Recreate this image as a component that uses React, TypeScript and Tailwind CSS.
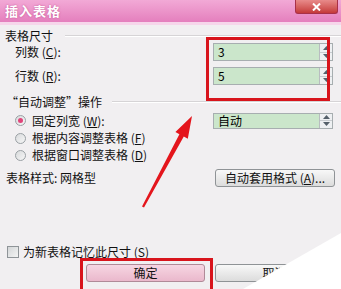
import React from "react"

const font = { fontFamily: '"Noto Sans CJK SC", "Noto Sans", sans-serif' }

function Spinner() {
  return (
    <div className="flex flex-col w-[13px] h-full border-l border-[#b8bcc0] bg-[#eef0f2]">
      <div className="flex-1 flex items-center justify-center border-b border-[#c8ccd0]">
        <svg width="7" height="4" viewBox="0 0 7 4"><path d="M0 4 L3.5 0 L7 4 Z" fill="#55606a" /></svg>
      </div>
      <div className="flex-1 flex items-center justify-center">
        <svg width="7" height="4" viewBox="0 0 7 4"><path d="M0 0 L3.5 4 L7 0 Z" fill="#55606a" /></svg>
      </div>
    </div>
  )
}

function NumInput({ value, h }: { value: string; h: string }) {
  return (
    <div className={`ml-auto mr-[8px] w-[120px] ${h} flex border border-[#a7aeb0] bg-[#cbe6cb]`}>
      <div className="flex-1 flex items-center pl-[4px] text-[12px] text-black leading-none">{value}</div>
      <Spinner />
    </div>
  )
}

function Radio({ checked }: { checked?: boolean }) {
  return (
    <div className="w-[11px] h-[11px] rounded-full border border-[#9aa0a4] bg-gradient-to-br from-[#d8dadc] to-[#f6f6f6] flex items-center justify-center">
      {checked && <div className="w-[5px] h-[5px] rounded-full bg-[#e0447a]" />}
    </div>
  )
}

export default function App() {
  return (
    <div className="relative w-[341px] h-[289px] overflow-hidden bg-[#f1eff1] text-[12px] text-[#111]" style={font}>
      {/* title bar */}
      <div className="h-[22px] flex items-start bg-gradient-to-b from-[#f2a9d6] to-[#e47fbd]">
        <span className="pl-[5px] pt-[3px] text-[13px] font-bold text-white leading-[16px] tracking-[1px]" style={{ textShadow: "0 0 2px #c0508f" }}>
          插入表格
        </span>
        <div className="ml-auto mr-[3px] w-[43px] h-[14px] rounded-b-[3px] border border-t-0 border-[#a83048] bg-gradient-to-b from-[#e88a8a] to-[#c4383a] flex items-center justify-center">
          <svg width="9" height="8" viewBox="0 0 9 8">
            <path d="M1 0.5 L8 7.5 M8 0.5 L1 7.5" stroke="#ffffff" strokeWidth="2" />
          </svg>
        </div>
      </div>
      <div className="h-[3px] bg-[#f6d6ea]" />

      {/* table size */}
      <div className="mt-[4px] h-[14px] flex items-center pl-[5px]">
        <span className="leading-none">表格尺寸</span>
        <div className="flex-1 ml-[12px] border-t border-[#d6d4d6] border-b-white border-b" />
      </div>
      <div className="h-[18px] flex items-center pl-[15px]">
        <span className="leading-none">列数 (<u>C</u>):</span>
        <NumInput value="3" h="h-[18px]" />
      </div>
      <div className="mt-[6px] h-[18px] flex items-center pl-[15px]">
        <span className="leading-none">行数 (<u>R</u>):</span>
        <NumInput value="5" h="h-[18px]" />
      </div>

      {/* autofit */}
      <div className="mt-[10px] h-[14px] flex items-center pl-[6px]">
        <span className="leading-none">“自动调整”操作</span>
        <div className="flex-1 ml-[10px] border-t border-[#d6d4d6] border-b-white border-b" />
      </div>
      <div className="mt-[3px] h-[17px] flex items-center pl-[15px]">
        <Radio checked />
        <span className="ml-[6px] leading-none">固定列宽 (<u>W</u>):</span>
        <NumInput value="自动" h="h-[16px]" />
      </div>
      <div className="mt-[2px] h-[14px] flex items-center pl-[15px]">
        <Radio />
        <span className="ml-[6px] leading-none">根据内容调整表格 (<u>F</u>)</span>
      </div>
      <div className="mt-[3px] h-[14px] flex items-center pl-[15px]">
        <Radio />
        <span className="ml-[6px] leading-none">根据窗口调整表格 (<u>D</u>)</span>
      </div>
      <div className="mt-[7px] h-[18px] flex items-center pl-[6px]">
        <span className="leading-none">表格样式: 网格型</span>
        <div className="ml-auto mr-[6px] w-[120px] h-[18px] rounded-[3px] border border-[#8f9396] bg-gradient-to-b from-[#f8f8f8] to-[#dcdcdc] flex items-center justify-center">
          <span className="leading-none">自动套用格式 (<u>A</u>)...</span>
        </div>
      </div>

      {/* remember */}
      <div className="mt-[58px] h-[14px] flex items-center pl-[7px]">
        <div className="w-[12px] h-[12px] border border-[#8f9498] bg-gradient-to-br from-[#d4d6d8] to-[#f4f4f4]" />
        <span className="ml-[4px] leading-none">为新表格记忆此尺寸 (<u>S</u>)</span>
      </div>
      <div className="mt-[5px] h-[18px] flex items-center pl-[86px] gap-[10px]">
        <div className="w-[119px] h-[18px] rounded-[3px] border border-[#b08a98] bg-gradient-to-b from-[#f6d6e2] to-[#eab8cc] flex items-center justify-center">
          <span className="leading-none">确定</span>
        </div>
        <div className="w-[119px] h-[18px] rounded-[3px] border border-[#8f9396] bg-gradient-to-b from-[#f8f8f8] to-[#dcdcdc] flex items-center justify-center">
          <span className="leading-none">取消</span>
        </div>
      </div>

      {/* annotations */}
      <div className="absolute left-[206px] top-[37px] w-[124px] h-[64px] border-[3px] border-[#d8141c]" />
      <svg className="absolute left-0 top-0" width="341" height="289" viewBox="0 0 341 289">
        <polygon points="341,233 341,289 243,289" fill="#ffffff" />
        <polygon
          points="142,206.5 144,207.5 183.8,136.6 187.8,138.7 192,116 175.4,132.1 179.4,134.2"
          fill="#e4151c"
        />
      </svg>
      <div className="absolute left-[80px] top-[258px] w-[133px] h-[34px] border-[3px] border-[#d8141c]" />
    </div>
  )
}
